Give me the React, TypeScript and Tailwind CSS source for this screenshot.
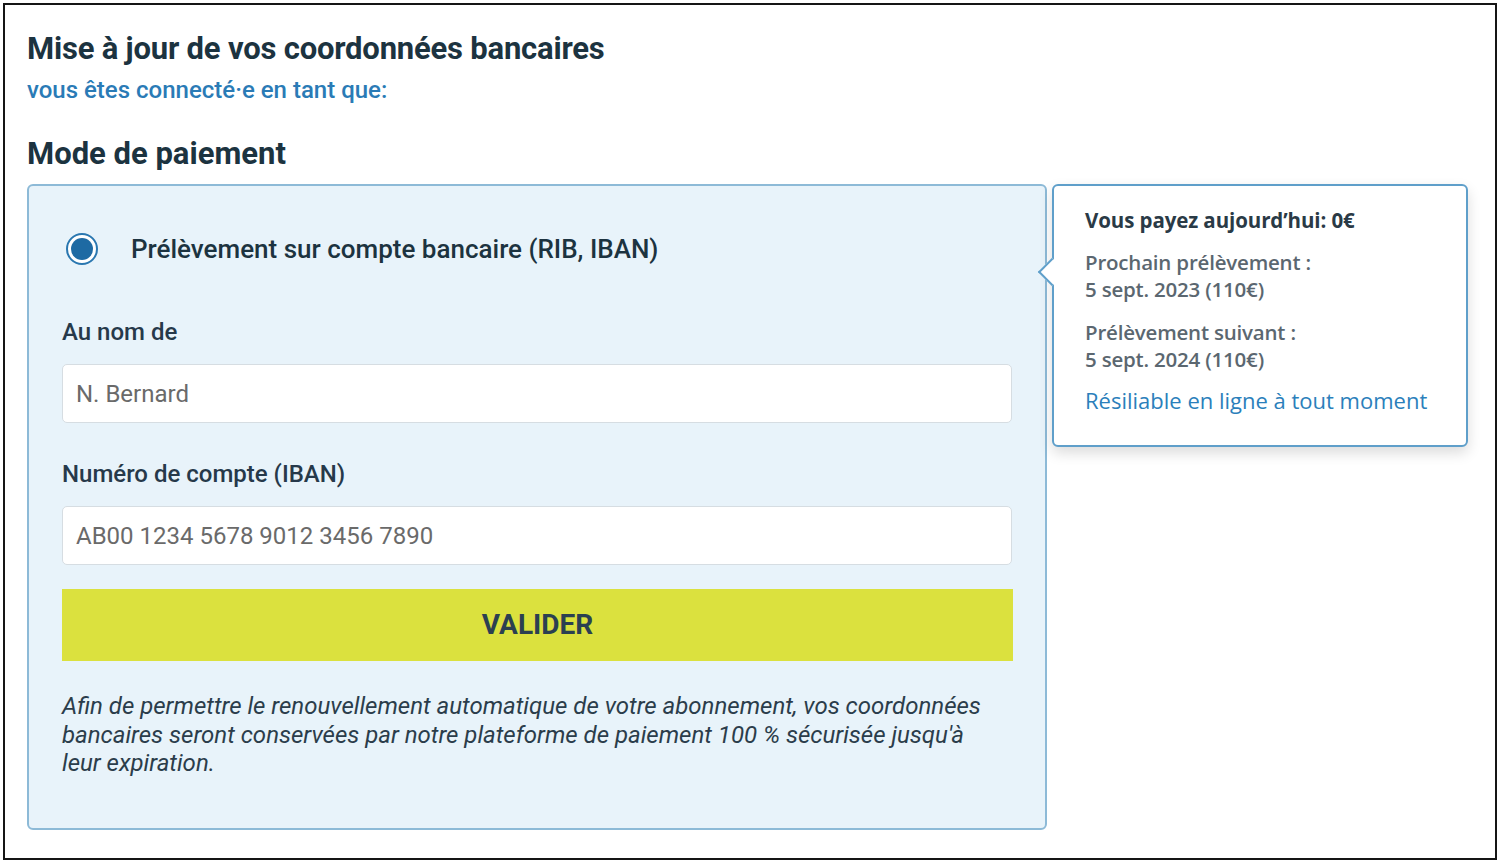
export default function App() {
  return (
    <div className="w-[1500px] h-[863px] bg-white pt-[3px] pl-[3px]" style={{ fontFamily: 'Roboto, "Liberation Sans", sans-serif' }}>
      <div className="w-[1494px] h-[857px] border-2 border-[#151515] bg-white pl-[22px] pt-[27px] overflow-hidden">
        {/* Header */}
        <h1 className="text-[31px] leading-[34px] font-bold text-[#1c3340] tracking-[-0.2px]">
          Mise à jour de vos coordonnées bancaires
        </h1>
        <p className="mt-[10px] text-[24px] leading-[28px] font-medium text-[#2a7bb6]">
          vous êtes connecté·e en tant que:
        </p>
        <h2 className="mt-[32px] text-[31px] leading-[36px] font-bold text-[#1c3340]">Mode de paiement</h2>

        <div className="mt-[12px] flex items-start gap-[5px]">
          {/* Payment panel */}
          <div className="w-[1020px] h-[646px] bg-[#e8f3fa] border-2 border-[#8dbad7] rounded-[6px] px-[33px] flex flex-col">
            <div className="mt-[47px] h-8 flex items-center">
              <div className="w-[32px] h-[32px] ml-[4px] rounded-full border-2 border-[#2a77b0] bg-white flex items-center justify-center">
                <div className="w-[22px] h-[22px] rounded-full bg-[#1e6aa3]" />
              </div>
              <span className="ml-[33px] text-[26px] font-medium text-[#1c3340]">
                Prélèvement sur compte bancaire (RIB, IBAN)
              </span>
            </div>

            <label className="mt-[53px] text-[24px] leading-[28px] font-medium text-[#26394a]">Au nom de</label>
            <div className="mt-[18px] h-[59px] w-[950px] bg-white border border-[#d6dde2] rounded-[5px] flex items-center pl-[13px] text-[24px] text-[#6a6a6a]">
              N. Bernard
            </div>

            <label className="mt-[37px] text-[24px] leading-[28px] font-medium text-[#26394a]">Numéro de compte (IBAN)</label>
            <div className="mt-[18px] h-[59px] w-[950px] bg-white border border-[#d6dde2] rounded-[5px] flex items-center pl-[13px] text-[24px] text-[#6a6a6a]">
              AB00 1234 5678 9012 3456 7890
            </div>

            <button className="mt-[24px] h-[72px] w-[951px] bg-[#dbe13e] text-[28px] font-bold text-[#2b4051]">
              VALIDER
            </button>

            <p className="mt-[31px] w-[935px] text-[24px] leading-[28.5px] italic text-[#2b3d4b]">
              Afin de permettre le renouvellement automatique de votre abonnement, vos coordonnées bancaires seront conservées par notre plateforme de paiement 100 % sécurisée jusqu'à leur expiration.
            </p>
          </div>

          {/* Summary tooltip */}
          <div
            className="relative w-[416px] bg-white border-2 border-[#5f9fca] rounded-[6px] pl-[31px] pt-[21px] pb-[31px] shadow-[0_6px_14px_rgba(0,0,0,0.14)]"
            style={{ fontFamily: '"Open Sans", Lato, sans-serif' }}
          >
            <div className="absolute left-[-12px] top-[76px] w-[20px] h-[20px] bg-white border-l-2 border-b-2 border-[#5f9fca] rotate-45" />
            <p className="relative text-[20.5px] leading-[27px] font-bold text-[#2a3a46] tracking-[-0.1px]">Vous payez aujourd’hui: 0€</p>
            <p className="relative mt-[15px] text-[20.5px] leading-[27px] font-semibold text-[#5b6770] tracking-[-0.2px]">
              Prochain prélèvement :<br />5 sept. 2023 (110€)
            </p>
            <p className="relative mt-[16px] text-[20.5px] leading-[27px] font-semibold text-[#5b6770] tracking-[-0.2px]">
              Prélèvement suivant :<br />5 sept. 2024 (110€)
            </p>
            <p className="relative mt-[14px] text-[22px] leading-[27px] font-normal text-[#2b7fbb]">
              Résiliable en ligne à tout moment
            </p>
          </div>
        </div>
      </div>
    </div>
  );
}
